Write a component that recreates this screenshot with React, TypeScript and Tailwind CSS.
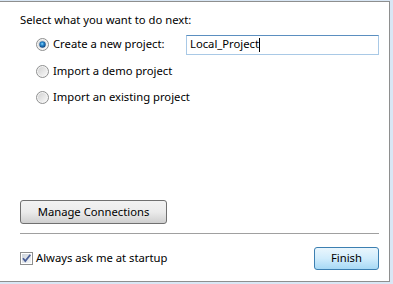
import { useState } from 'react';

function Radio({ checked }: { checked?: boolean }) {
  return (
    <svg width="13" height="13" viewBox="0 0 13 13" className="shrink-0">
      <defs>
        <linearGradient id="rbg" x1="0" y1="0" x2="1" y2="1">
          <stop offset="0" stopColor="#d2d2d2" />
          <stop offset="1" stopColor="#f8f8f8" />
        </linearGradient>
        <radialGradient id="rdot" cx="0.45" cy="0.4" r="0.6">
          <stop offset="0" stopColor="#9fe0ff" />
          <stop offset="0.35" stopColor="#2d8fd4" />
          <stop offset="1" stopColor="#0c3f7a" />
        </radialGradient>
      </defs>
      <circle cx="6.5" cy="6.5" r="6" fill="#f4f4f4" stroke="#8e8f8f" />
      <circle cx="6.5" cy="6.5" r="4.5" fill="url(#rbg)" />
      {checked && <circle cx="6.5" cy="6.5" r="3.2" fill="url(#rdot)" />}
    </svg>
  );
}

function Checkbox() {
  return (
    <svg width="13" height="13" viewBox="0 0 13 13" className="shrink-0">
      <defs>
        <linearGradient id="cbg" x1="0" y1="0" x2="1" y2="1">
          <stop offset="0" stopColor="#cdd3da" />
          <stop offset="1" stopColor="#f4f6f8" />
        </linearGradient>
      </defs>
      <rect x="0.5" y="0.5" width="12" height="12" fill="#fff" stroke="#8e8f8f" />
      <rect x="2" y="2" width="9" height="9" fill="url(#cbg)" />
      <path d="M3 6.2 L5.3 9 L10.3 2.8" fill="none" stroke="#4a5f97" strokeWidth="1.8" />
    </svg>
  );
}

export default function App() {
  const [choice, setChoice] = useState(0);
  const options = ['Create a new project:', 'Import a demo project', 'Import an existing project'];
  const rowHeights = ['h-[27px]', 'h-[26px]', 'h-[27px]'];

  return (
    <div
      className="w-[393px] h-[284px] bg-[#d9e7f5] pt-px text-[11.25px] text-black whitespace-nowrap"
      style={{ fontFamily: '"Noto Sans", "Open Sans", sans-serif' }}
    >
      <div className="w-[390px] h-[281px] bg-white border-t border-r border-b border-[#8e8f8f] flex flex-col pl-[20px] pr-[10px] pb-[11px]">
        <div className="mt-[8px] h-[20px] flex items-center">Select what you want to do next:</div>

        <div className="mt-px flex flex-col">
          {options.map((label, i) => (
            <div
              key={label}
              className={`${rowHeights[i]} flex items-center pl-[16px] cursor-default`}
              onClick={() => setChoice(i)}
            >
              <Radio checked={choice === i} />
              <span className="ml-[4px]">{label}</span>
              {i === 0 && (
                <div className="ml-auto w-[193px] h-[20px] border border-[#a9c9e6] border-t-[#5b8fc0] flex items-center pl-[3px]">
                  <span>Local_Project</span>
                  <span className="w-px h-[14px] bg-black" />
                </div>
              )}
            </div>
          ))}
        </div>

        <div className="flex-1" />

        <button className="w-[147px] h-[24px] rounded-[3px] border border-[#707070] bg-gradient-to-b from-[#f2f2f2] via-[#ebebeb] to-[#cfcfcf] flex items-center justify-center">
          Manage Connections
        </button>

        <div className="mt-[9px] h-px bg-[#a0a0a0]" />

        <div className="mt-[13px] h-[23px] flex items-center">
          <Checkbox />
          <span className="ml-[3px]">Always ask me at startup</span>
          <button className="ml-auto w-[65px] h-[23px] rounded-[3px] border border-[#3c7fb1] bg-gradient-to-b from-[#eaf6fd] via-[#d0ecfc] to-[#a7d9f5] flex items-center justify-center">
            Finish
          </button>
        </div>
      </div>
    </div>
  );
}
